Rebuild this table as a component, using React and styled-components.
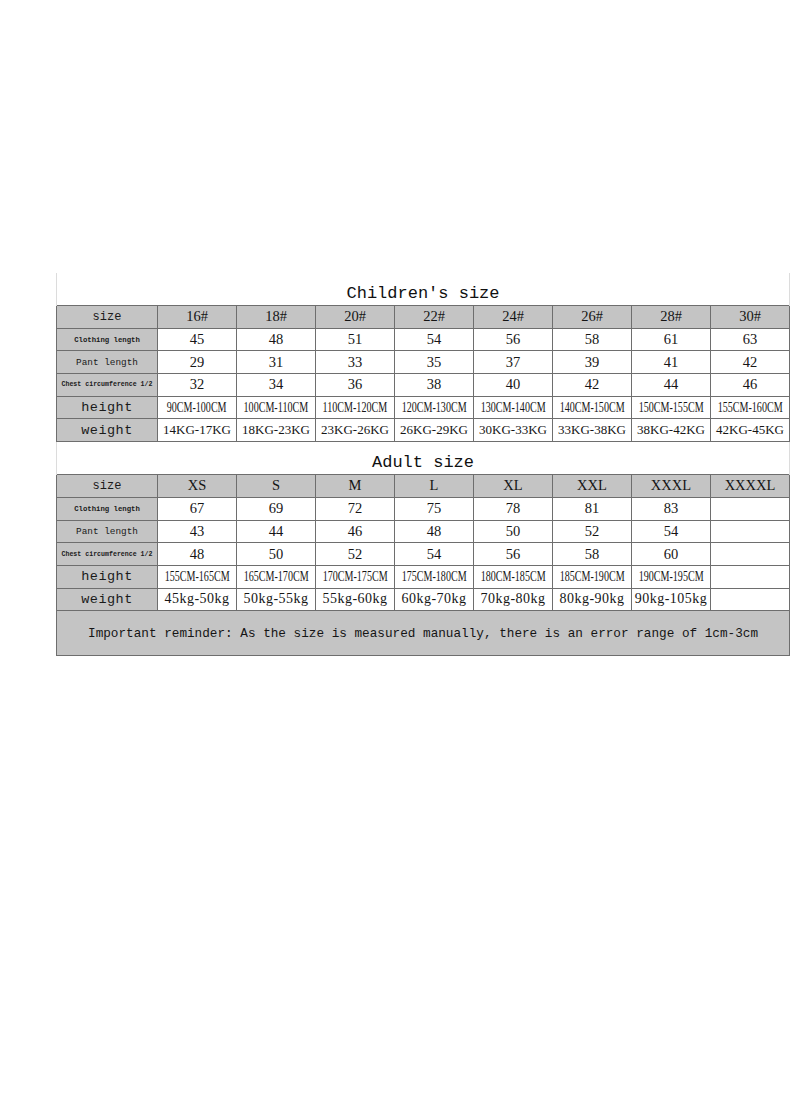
import React from 'react';
import styled, { createGlobalStyle } from 'styled-components';

const GlobalStyle = createGlobalStyle`
  html, body {
    margin: 0;
    padding: 0;
    background: #ffffff;
  }
  body {
    font-family: "Liberation Serif", "Times New Roman", serif;
    color: #141414;
  }
`;

const children = {
  title: "Children's size",
  sizes: ['16#', '18#', '20#', '22#', '24#', '26#', '28#', '30#'],
  rows: [
    { label: 'Clothing length', kind: 'tiny', values: ['45', '48', '51', '54', '56', '58', '61', '63'] },
    { label: 'Pant length', kind: 'small', values: ['29', '31', '33', '35', '37', '39', '41', '42'] },
    { label: 'Chest circumference 1/2', kind: 'micro', values: ['32', '34', '36', '38', '40', '42', '44', '46'] },
    { label: 'height', kind: 'big', cell: 'range', values: ['90CM-100CM', '100CM-110CM', '110CM-120CM', '120CM-130CM', '130CM-140CM', '140CM-150CM', '150CM-155CM', '155CM-160CM'] },
    { label: 'weight', kind: 'big', cell: 'kg', values: ['14KG-17KG', '18KG-23KG', '23KG-26KG', '26KG-29KG', '30KG-33KG', '33KG-38KG', '38KG-42KG', '42KG-45KG'] },
  ],
};

const adults = {
  title: 'Adult size',
  sizes: ['XS', 'S', 'M', 'L', 'XL', 'XXL', 'XXXL', 'XXXXL'],
  rows: [
    { label: 'Clothing length', kind: 'tiny', values: ['67', '69', '72', '75', '78', '81', '83', ''] },
    { label: 'Pant length', kind: 'small', values: ['43', '44', '46', '48', '50', '52', '54', ''] },
    { label: 'Chest circumference 1/2', kind: 'micro', values: ['48', '50', '52', '54', '56', '58', '60', ''] },
    { label: 'height', kind: 'big', cell: 'range', values: ['155CM-165CM', '165CM-170CM', '170CM-175CM', '175CM-180CM', '180CM-185CM', '185CM-190CM', '190CM-195CM', ''] },
    { label: 'weight', kind: 'big', cell: 'lowkg', values: ['45kg-50kg', '50kg-55kg', '55kg-60kg', '60kg-70kg', '70kg-80kg', '80kg-90kg', '90kg-105kg', ''] },
  ],
};

const labelSizes = {
  micro: '6.6px',
  tiny: '7.3px',
  small: '9.4px',
  big: '13.5px',
};

const cellFonts = {
  plain: { size: '14.5px', spacing: '0' },
  range: { size: '14px', spacing: '0' },
  kg: { size: '13px', spacing: '0' },
  lowkg: { size: '14px', spacing: '0.5px' },
};

const Page = styled.div`
  padding-top: 273px;
  padding-left: 56px;
`;

const Sheet = styled.table`
  width: 734px;
  border-collapse: collapse;
  table-layout: fixed;
`;

const TitleCell = styled.td`
  height: 32px;
  padding: 0;
  border-left: 1px solid #dcdcdc;
  border-right: 1px solid #dcdcdc;
  text-align: center;
  vertical-align: bottom;
  font-family: "Liberation Mono", "DejaVu Sans Mono", monospace;
  font-size: 17px;
  line-height: 22px;
  color: #111;
`;

const Row = styled.tr`
  height: 22.7px;
`;

const Label = styled.td`
  padding: 0;
  border: 1px solid #6e6e6e;
  background: #c4c4c4;
  text-align: center;
  white-space: nowrap;
  font-family: "Liberation Mono", "DejaVu Sans Mono", monospace;
  font-size: ${p => labelSizes[p.$kind] || '12px'};
  font-weight: ${p => (p.$kind === 'tiny' || p.$kind === 'micro' ? 700 : 400)};
  letter-spacing: ${p => (p.$kind === 'big' ? '0.5px' : '0')};
  color: #1a1a1a;
`;

const HeadCell = styled.td`
  padding: 0;
  border: 1px solid #6e6e6e;
  background: #c4c4c4;
  text-align: center;
  font-size: 14.5px;
  color: #141414;
  white-space: nowrap;
`;

const Cell = styled.td`
  padding: 0;
  border: 1px solid #6e6e6e;
  background: #ffffff;
  text-align: center;
  white-space: nowrap;
  overflow: hidden;
  font-size: ${p => cellFonts[p.$kind].size};
  letter-spacing: ${p => cellFonts[p.$kind].spacing};
  color: #161616;
`;

// height ranges are set in a condensed face in the original;
// negative margins keep the unscaled box from pushing the text off centre
const Narrow = styled.span`
  display: inline-block;
  margin: 0 -14px;
  transform: scaleX(0.72);
  transform-origin: center;
`;

const Reminder = styled.td`
  height: 44px;
  padding: 0;
  border: 1px solid #6e6e6e;
  background: #c4c4c4;
  text-align: center;
  font-family: "Liberation Mono", "DejaVu Sans Mono", monospace;
  font-size: 12.7px;
  color: #151515;
`;

function SizeBlock({ data }) {
  return (
    <>
      <tr>
        <TitleCell colSpan={9}>{data.title}</TitleCell>
      </tr>
      <Row>
        <Label $kind="size">size</Label>
        {data.sizes.map(s => (
          <HeadCell key={s}>{s}</HeadCell>
        ))}
      </Row>
      {data.rows.map(r => {
        const kind = r.cell || 'plain';
        return (
          <Row key={r.label}>
            <Label $kind={r.kind}>{r.label}</Label>
            {r.values.map((v, i) => (
              <Cell key={i} $kind={kind}>
                {kind === 'range' && v ? <Narrow>{v}</Narrow> : v}
              </Cell>
            ))}
          </Row>
        );
      })}
    </>
  );
}

export default function App() {
  return (
    <>
      <GlobalStyle />
      <Page>
        <Sheet>
          <colgroup>
            <col style={{ width: '101px' }} />
            {Array.from({ length: 8 }).map((_, i) => (
              <col key={i} style={{ width: '79px' }} />
            ))}
          </colgroup>
          <tbody>
            <SizeBlock data={children} />
            <SizeBlock data={adults} />
            <tr>
              <Reminder colSpan={9}>
                Important reminder: As the size is measured manually, there is an error range of 1cm-3cm
              </Reminder>
            </tr>
          </tbody>
        </Sheet>
      </Page>
    </>
  );
}
